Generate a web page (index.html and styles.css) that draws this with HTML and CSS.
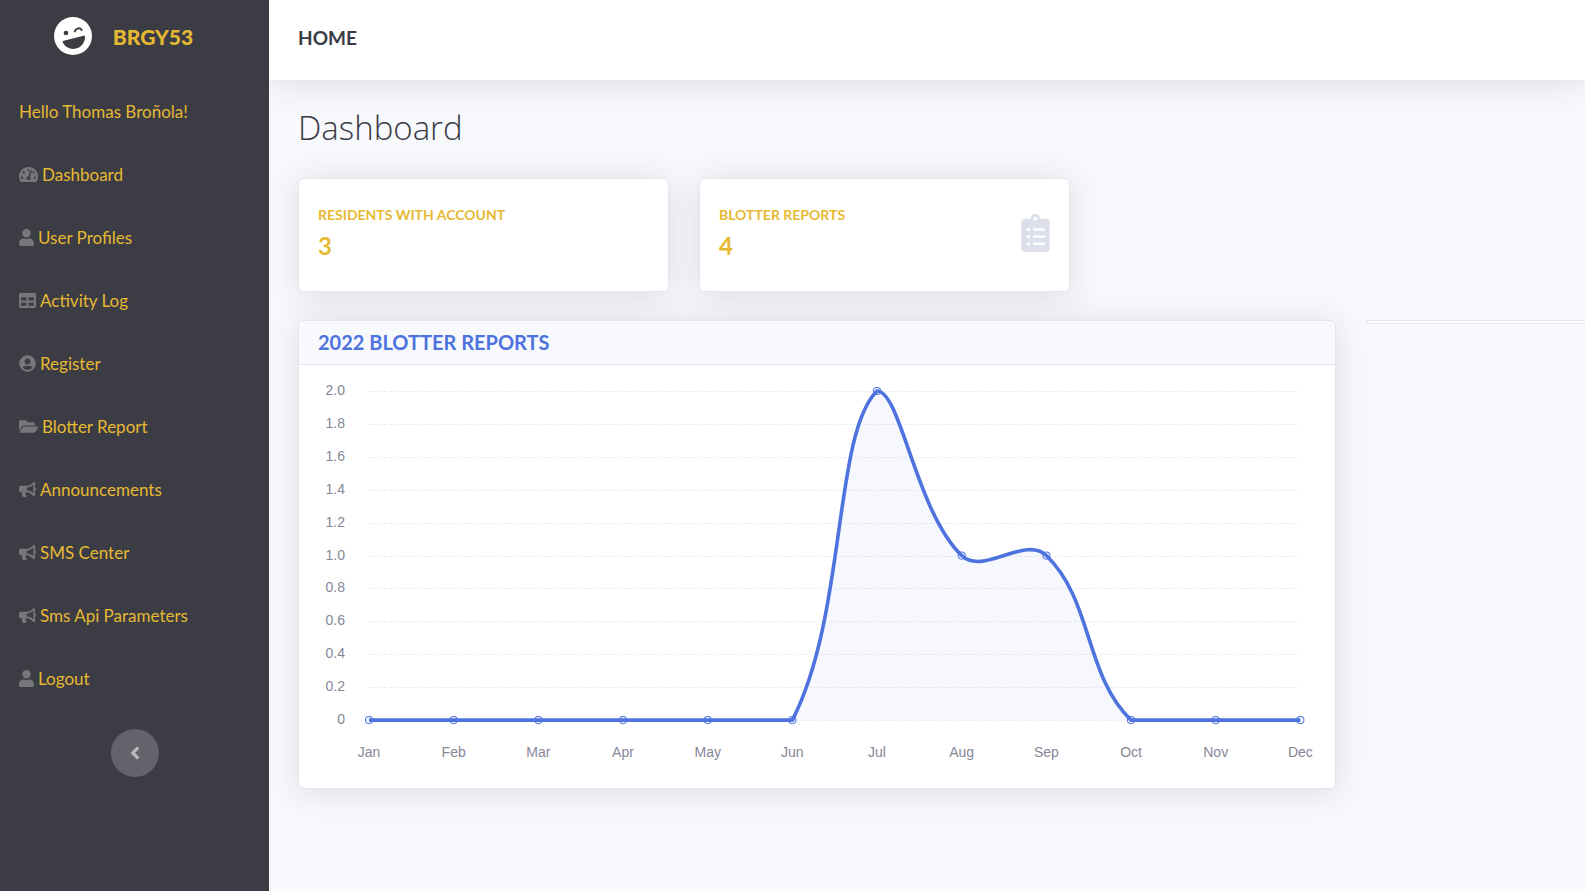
FILE: index.html
```html
<!DOCTYPE html>
<html lang="en">
<head>
<meta charset="utf-8">
<meta name="viewport" content="width=device-width, initial-scale=1">
<title>BRGY53 Dashboard</title>
<link rel="stylesheet" href="styles.css">
</head>
<body>
<svg class="sprite" aria-hidden="true">
  <symbol id="gauge" viewBox="0 0 576 512"><path d="M288 32C128.94 32 0 160.94 0 320c0 52.8 14.25 102.26 39.06 144.8 5.61 9.62 16.3 15.2 27.44 15.2h443c11.14 0 21.83-5.58 27.44-15.2C561.75 422.26 576 372.8 576 320c0-159.06-128.94-288-288-288zm0 64c14.71 0 26.58 10.13 30.32 23.65-1.11 2.26-2.64 4.23-3.45 6.67l-9.22 27.67c-5.13 3.49-10.97 6.01-17.64 6.01-17.67 0-32-14.33-32-32S270.33 96 288 96zM96 384c-17.67 0-32-14.33-32-32s14.33-32 32-32 32 14.33 32 32-14.33 32-32 32zm48-160c-17.67 0-32-14.33-32-32s14.33-32 32-32 32 14.33 32 32-14.33 32-32 32zm246.77-72.41l-61.33 184C343.13 347.33 352 364.54 352 384c0 11.72-3.38 22.55-8.88 32H232.88c-5.5-9.45-8.88-20.28-8.88-32 0-33.94 26.5-61.43 59.9-63.59l61.34-184.01c4.17-12.56 17.73-19.45 30.36-15.17 12.57 4.19 19.35 17.79 15.17 30.36zm14.66 57.2l15.52-46.55c3.47-1.29 7.13-2.23 11.05-2.23 17.67 0 32 14.33 32 32s-14.33 32-32 32c-11.38-.01-20.89-6.28-26.57-15.22zM480 384c-17.67 0-32-14.33-32-32s14.33-32 32-32 32 14.33 32 32-14.33 32-32 32z"/></symbol>
  <symbol id="user" viewBox="0 0 448 512"><path d="M224 256c70.7 0 128-57.3 128-128S294.7 0 224 0 96 57.3 96 128s57.3 128 128 128zm89.6 32h-16.7c-22.2 10.2-46.9 16-72.9 16s-50.6-5.8-72.9-16h-16.7C60.2 288 0 348.2 0 422.4V464c0 26.5 21.5 48 48 48h352c26.5 0 48-21.5 48-48v-41.6c0-74.2-60.2-134.4-134.4-134.4z"/></symbol>
  <symbol id="table" viewBox="0 0 512 512"><path d="M464 32H48C21.49 32 0 53.49 0 80v352c0 26.51 21.49 48 48 48h416c26.51 0 48-21.49 48-48V80c0-26.51-21.49-48-48-48zM224 416H64v-96h160v96zm0-160H64v-96h160v96zm224 160H288v-96h160v96zm0-160H288v-96h160v96z"/></symbol>
  <symbol id="account" viewBox="0 0 496 512"><path d="M248 8C111 8 0 119 0 256s111 248 248 248 248-111 248-248S385 8 248 8zm0 96c48.6 0 88 39.4 88 88s-39.4 88-88 88-88-39.4-88-88 39.4-88 88-88zm0 344c-58.7 0-111.3-26.6-146.5-68.2 18.8-35.4 55.6-59.8 98.5-59.8 2.4 0 4.8.4 7.1 1.1 13 4.2 26.6 6.9 40.9 6.9 14.3 0 28-2.7 40.9-6.9 2.3-.7 4.7-1.1 7.1-1.1 42.9 0 79.7 24.4 98.5 59.8C359.3 421.4 306.7 448 248 448z"/></symbol>
  <symbol id="folder" viewBox="0 0 576 512"><path d="M572.694 292.093L500.27 416.248A63.997 63.997 0 0 1 444.989 448H45.025c-18.523 0-30.064-20.093-20.731-36.093l72.424-124.155A64 64 0 0 1 152 256h399.964c18.523 0 30.064 20.093 20.73 36.093zM152 224h328v-48c0-26.51-21.49-48-48-48H272l-64-64H48C21.49 64 0 85.49 0 112v278.046l69.077-118.418C86.214 242.25 117.989 224 152 224z"/></symbol>
  <symbol id="bullhorn" viewBox="0 0 576 512"><path d="M576 240c0-23.63-12.95-44.04-32-55.12V32.01C544 23.26 537.02 0 512 0c-7.12 0-14.19 2.38-19.98 7.02l-85.03 68.03C364.28 109.19 310.66 128 256 128H64c-35.35 0-64 28.65-64 64v96c0 35.35 28.65 64 64 64h33.7c-1.39 10.48-2.18 21.14-2.18 32 0 39.77 9.26 77.35 25.56 110.94 5.19 10.69 16.52 17.06 28.4 17.06h74.28c26.05 0 41.69-29.84 25.9-50.56-16.4-21.52-26.15-48.36-26.15-77.44 0-11.11 1.62-21.79 4.41-32H256c54.66 0 108.28 18.81 150.98 52.95l85.03 68.03a32.023 32.023 0 0 0 19.98 7.02c24.92 0 32-22.78 32-32V295.13C563.05 284.04 576 263.63 576 240zm-90 155L447 350C393 310 330 288 262 280v-84c68-8 131-30 185-73L486 85v310z"/></symbol>
</svg>
<div class="app">
  <aside class="sidebar">
    <a class="brand" href="#">
      <svg class="brand-icon" viewBox="0 0 114 114" aria-hidden="true">
        <circle cx="57" cy="57" r="57" fill="#fff"/>
        <circle cx="36" cy="48" r="7" fill="#3c3c45"/>
        <path d="M62 43C66 33 78 31 83 39" fill="none" stroke="#3c3c45" stroke-width="6" stroke-linecap="round"/>
        <path d="M29 71L89 56Q94 55 93 61C92 82 77 95 59 96C43 96 31 87 26 76Q25 72 29 71Z" fill="#3c3c45"/>
      </svg>
      <span>BRGY53</span>
    </a>
    <nav class="menu">
      <a href="#">Hello Thomas Broñola!</a>
      <a href="#"><svg class="icon wide"><use href="#gauge"/></svg>Dashboard</a>
      <a href="#"><svg class="icon narrow"><use href="#user"/></svg>User Profiles</a>
      <a href="#"><svg class="icon"><use href="#table"/></svg>Activity Log</a>
      <a href="#"><svg class="icon"><use href="#account"/></svg>Register</a>
      <a href="#"><svg class="icon wide"><use href="#folder"/></svg>Blotter Report</a>
      <a href="#"><svg class="icon"><use href="#bullhorn"/></svg>Announcements</a>
      <a href="#"><svg class="icon"><use href="#bullhorn"/></svg>SMS Center</a>
      <a href="#"><svg class="icon"><use href="#bullhorn"/></svg>Sms Api Parameters</a>
      <a href="#"><svg class="icon narrow"><use href="#user"/></svg>Logout</a>
    </nav>
    <button class="toggle" type="button" aria-label="Collapse sidebar">
      <svg viewBox="0 0 256 512" aria-hidden="true"><path d="M31.7 239l136-136c9.4-9.4 24.6-9.4 33.9 0l22.6 22.6c9.4 9.4 9.4 24.6 0 33.9L127.9 256l96.4 96.4c9.4 9.4 9.4 24.6 0 33.9L201.7 409c-9.4 9.4-24.6 9.4-33.9 0l-136-136c-9.5-9.4-9.5-24.6-.1-34z"/></svg>
    </button>
  </aside>
  <div class="page">
    <header class="topbar">HOME</header>
    <main class="content">
      <h1>Dashboard</h1>
      <div class="stats">
        <section class="card stat">
          <div>
            <h2>RESIDENTS WITH ACCOUNT</h2>
            <p>3</p>
          </div>
        </section>
        <section class="card stat">
          <div>
            <h2>BLOTTER REPORTS</h2>
            <p>4</p>
          </div>
          <svg class="clipboard" viewBox="0 0 384 512" aria-hidden="true"><path d="M336 64h-80c0-35.3-28.7-64-64-64s-64 28.7-64 64H48C21.5 64 0 85.5 0 112v352c0 26.5 21.5 48 48 48h288c26.5 0 48-21.5 48-48V112c0-26.5-21.5-48-48-48zM96 424c-13.3 0-24-10.7-24-24s10.7-24 24-24 24 10.7 24 24-10.7 24-24 24zm0-96c-13.3 0-24-10.7-24-24s10.7-24 24-24 24 10.7 24 24-10.7 24-24 24zm0-96c-13.3 0-24-10.7-24-24s10.7-24 24-24 24 10.7 24 24-10.7 24-24 24zm96-192c13.3 0 24 10.7 24 24s-10.7 24-24 24-24-10.7-24-24 10.7-24 24-24zm128 368c0 4.4-3.6 8-8 8H168c-4.4 0-8-3.6-8-8v-16c0-4.4 3.6-8 8-8h144c4.4 0 8 3.6 8 8v16zm0-96c0 4.4-3.6 8-8 8H168c-4.4 0-8-3.6-8-8v-16c0-4.4 3.6-8 8-8h144c4.4 0 8 3.6 8 8v16zm0-96c0 4.4-3.6 8-8 8H168c-4.4 0-8-3.6-8-8v-16c0-4.4 3.6-8 8-8h144c4.4 0 8 3.6 8 8v16z"/></svg>
        </section>
      </div>
      <div class="charts">
        <section class="card">
          <h2 class="card-title">2022 BLOTTER REPORTS</h2>
          <div class="chart-body">
            <svg id="chart" class="chart" viewBox="0 0 998 385" role="img" aria-label="Blotter reports per month"></svg>
          </div>
        </section>
        <div class="card empty"></div>
      </div>
    </main>
  </div>
</div>
<script src="chart.js"></script>
</body>
</html>
```
FILE: styles.css
```css
* { box-sizing: border-box; }
body {
  margin: 0;
  font-family: Lato, "Noto Sans", sans-serif;
  color: #3a3b45;
  background: #f8f9fc;
}
h1, h2, p { margin: 0; }
a { color: inherit; text-decoration: none; }
.sprite { display: none; }
.app { display: flex; min-height: 100vh; overflow: hidden; }

.sidebar {
  position: relative;
  z-index: 2;
  flex: 0 0 269px;
  display: flex;
  flex-direction: column;
  align-items: center;
  background: #3c3c45;
  color: #e6b932;
}
.brand {
  display: flex;
  align-items: center;
  justify-content: center;
  gap: 21px;
  height: 72px;
  padding-right: 22px;
  font-size: 21px;
  font-weight: 900;
}
.brand-icon { width: 38px; height: 38px; }
.menu { align-self: stretch; padding-top: 8px; }
.menu a {
  display: flex;
  align-items: center;
  gap: 4px;
  height: 63px;
  padding: 0 19px;
  font-size: 17px;
}
.icon { width: 17px; height: 17px; fill: #76767d; }
.icon.wide { width: 19px; }
.icon.narrow { width: 15px; }
.toggle {
  display: flex;
  align-items: center;
  justify-content: center;
  width: 48px;
  height: 48px;
  margin-top: 19px;
  padding: 0;
  border: 0;
  border-radius: 50%;
  background: #63636b;
}
.toggle svg { width: 10px; height: 20px; fill: #b9b9bd; }

.page { flex: 1; min-width: 0; }
.topbar {
  position: relative;
  display: flex;
  align-items: center;
  height: 80px;
  padding: 0 29px 6px;
  background: #fff;
  box-shadow: 0 3px 34px rgba(58, 59, 69, .15);
  font-size: 19px;
  font-weight: 700;
}
.content { padding: 28px 0 60px 29px; }
h1 { font-family: "Open Sans", Lato, sans-serif; font-size: 33px; line-height: 40px; font-weight: 300; }
.stats {
  display: grid;
  grid-template-columns: 13fr 13fr 17fr;
  gap: 30px;
  margin-top: 30px;
}
.charts {
  display: grid;
  grid-template-columns: 19fr 4fr;
  align-items: start;
  gap: 30px;
  margin-top: 28px;
}
.card {
  background: #fff;
  border: 1px solid #e3e6f0;
  border-radius: 6px;
  box-shadow: 0 3px 34px rgba(58, 59, 69, .15);
}
.stat {
  display: flex;
  align-items: center;
  justify-content: space-between;
  height: 114px;
  padding: 0 19px 4px;
  color: #e6b932;
}
.stat h2 { font-size: 14px; line-height: 20px; font-weight: 700; }
.stat p { margin-top: 6px; font-size: 24px; line-height: 30px; font-weight: 700; }
.clipboard { width: 29px; height: 38px; fill: #dddfeb; }
.card-title {
  padding: 0 19px 1px;
  font-size: 20px;
  line-height: 42px;
  font-weight: 700;
  color: #4e73df;
  background: #f8f9fc;
  border-bottom: 1px solid #e3e6f0;
  border-radius: 6px 6px 0 0;
}
.chart-body { padding: 19px; }
.chart { display: block; width: 100%; overflow: visible; }
.chart text { font: 14px "Liberation Sans", Arial, sans-serif; fill: #858796; }
.grid-line { stroke: #eaecf4; stroke-width: 1; stroke-dasharray: 3 2; }
.area { fill: rgba(78, 115, 223, .05); }
.line { fill: none; stroke: #4e73df; stroke-width: 3.6; }
.dot { fill: rgba(78, 115, 223, .05); stroke: #4e73df; stroke-width: 1; }
.empty { height: 4px; border-right: 0; border-radius: 1px 0 0 1px; box-shadow: 0 3px 34px rgba(58, 59, 69, .03); }
```
FILE: chart.js
```js
const months = ["Jan", "Feb", "Mar", "Apr", "May", "Jun", "Jul", "Aug", "Sep", "Oct", "Nov", "Dec"];
const values = [0, 0, 0, 0, 0, 0, 2, 1, 1, 0, 0, 0];
const svg = document.getElementById("chart");
const left = 51, right = 982, top0 = 7, bottom = 336;
const tension = 0.4;
const px = i => left + (right - left) * i / (months.length - 1);
const py = v => bottom - (bottom - top0) * v / 2;

function add(name, attrs, text) {
  const el = document.createElementNS("http://www.w3.org/2000/svg", name);
  for (const key in attrs) el.setAttribute(key, attrs[key]);
  if (text) el.textContent = text;
  svg.appendChild(el);
}

for (let n = 0; n <= 10; n++) {
  const y = Math.round(py(n / 5)) + 0.5;
  add("line", { class: "grid-line", x1: left, x2: right - 2, y1: y, y2: y });
  add("text", { x: 27, y: Math.round(y + 3), "text-anchor": "end" }, n ? (n / 5).toFixed(1) : "0");
}

const points = values.map((v, i) => [px(i), py(v)]);
const clamp = y => Math.min(bottom, Math.max(top0, y));
const controls = points.map((p, i) => {
  const a = points[i - 1] || p, b = points[i + 1] || p;
  const da = Math.hypot(p[0] - a[0], p[1] - a[1]);
  const db = Math.hypot(b[0] - p[0], b[1] - p[1]);
  const fa = tension * da / (da + db), fb = tension * db / (da + db);
  return {
    before: [p[0] - fa * (b[0] - a[0]), clamp(p[1] - fa * (b[1] - a[1]))],
    after: [p[0] + fb * (b[0] - a[0]), clamp(p[1] + fb * (b[1] - a[1]))]
  };
});
let d = "M" + points[0];
for (let i = 1; i < points.length; i++) {
  d += " C" + controls[i - 1].after + " " + controls[i].before + " " + points[i];
}
add("path", { class: "area", d: d + "Z" });
add("path", { class: "line", d: d });
points.forEach((p, i) => {
  add("circle", { class: "dot", cx: p[0], cy: p[1], r: 3.6 });
  add("text", { x: p[0], y: 373, "text-anchor": "middle" }, months[i]);
});
```
